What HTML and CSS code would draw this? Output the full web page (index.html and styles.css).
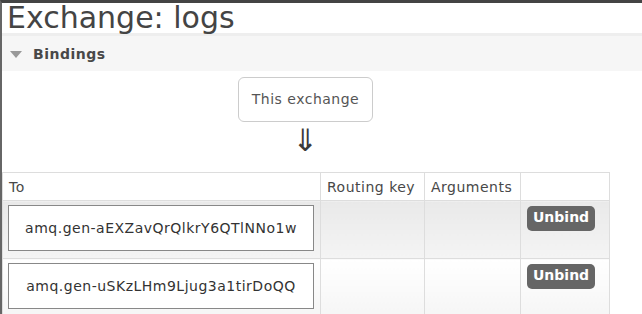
FILE: index.html
```html
<!DOCTYPE html>
<html>
<head>
<meta charset="utf-8">
<link rel="stylesheet" href="styles.css">
</head>
<body>
<div class="page">
  <h1 class="title">Exchange: logs</h1>
  <div class="section">
    <div class="section-head"><span class="tri"></span><span class="section-name">Bindings</span></div>
    <div class="section-body">
      <div class="flow">
        <div class="this-box">This exchange</div>
        <div class="arrow">&#8659;</div>
      </div>
      <table class="bindings">
        <thead>
          <tr><th class="c-to">To</th><th class="c-rk">Routing key</th><th class="c-args">Arguments</th><th class="c-act"></th></tr>
        </thead>
        <tbody>
          <tr class="alt1">
            <td class="q"><div class="queue">amq.gen-aEXZavQrQlkrY6QTlNNo1w</div></td>
            <td></td><td></td>
            <td class="act"><span class="btn">Unbind</span></td>
          </tr>
          <tr class="alt2">
            <td class="q"><div class="queue">amq.gen-uSKzLHm9Ljug3a1tirDoQQ</div></td>
            <td></td><td></td>
            <td class="act"><span class="btn">Unbind</span></td>
          </tr>
        </tbody>
      </table>
    </div>
  </div>
</div>
</body>
</html>
```

FILE: styles.css
```css
html, body {
  margin: 0;
  padding: 0;
  background: #fff;
}
body {
  font-family: "DejaVu Sans", Verdana, sans-serif;
  color: #484848;
  height: 314px;
  overflow: hidden;
  letter-spacing: 0.5px;
}
.page {
  border-top: 3px solid #444;
  border-left: 2px solid #666;
  min-height: 311px;
}
.title {
  margin: 0;
  padding: 0 0 0 5px;
  font-weight: normal;
  font-size: 30px;
  line-height: 30px;
  letter-spacing: 0;
  color: #444;
  background: #fff;
  height: 30px;
}
.section-head {
  background: #f6f6f6;
  height: 35px;
  display: flex;
  align-items: center;
  padding-left: 8px;
  border-top: 3px solid #eeeeee;
}
.tri {
  width: 0;
  height: 0;
  border-left: 6px solid transparent;
  border-right: 6px solid transparent;
  border-top: 7px solid #999;
  margin-right: 11px;
  margin-top: 2px;
}
.section-name {
  font-weight: bold;
  font-size: 14px;
  color: #484848;
}
.section-body {
  padding-top: 6px;
}
.flow {
  width: 607px;
  display: flex;
  flex-direction: column;
  align-items: center;
}
.this-box {
  border: 1px solid #ccc;
  border-radius: 6px;
  font-size: 14px;
  color: #555;
  padding: 0 13px;
  height: 43px;
  line-height: 43px;
}
.arrow {
  font-size: 31px;
  line-height: 30px;
  height: 30px;
  margin-top: 3px;
  margin-bottom: 17px;
  color: #3a3a3a;
  letter-spacing: 0;
}
.bindings {
  border-collapse: collapse;
  font-size: 14px;
}
.bindings th {
  font-weight: normal;
  text-align: left;
  height: 27px;
  padding: 0 6px;
  border: 1px solid #ddd;
  color: #484848;
  background: #fff;
}
.bindings th.c-to { width: 305px; }
.bindings th.c-rk { width: 91px; }
.bindings th.c-args { width: 83px; }
.bindings th.c-act { width: 76px; }
.bindings td {
  border: 1px solid #ddd;
  padding: 4px 6px 0;
  vertical-align: top;
  height: 52px;
}
.bindings td.q {
  padding: 4px 6px 0 5px;
}
.alt1 td { background: linear-gradient(#e9e9e9, #f4f4f4); }
.alt2 td { background: linear-gradient(#ffffff, #f5f5f5); }
.queue {
  border: 1px solid #888;
  background: #fff;
  height: 44px;
  line-height: 44px;
  text-align: center;
  color: #333;
}
.bindings td.act { padding-top: 5px; }
.btn {
  display: inline-block;
  background: #666;
  color: #fff;
  font-weight: bold;
  padding: 0 6px;
  height: 25px;
  line-height: 23px;
  border-radius: 5px;
  letter-spacing: 0;
}
```
